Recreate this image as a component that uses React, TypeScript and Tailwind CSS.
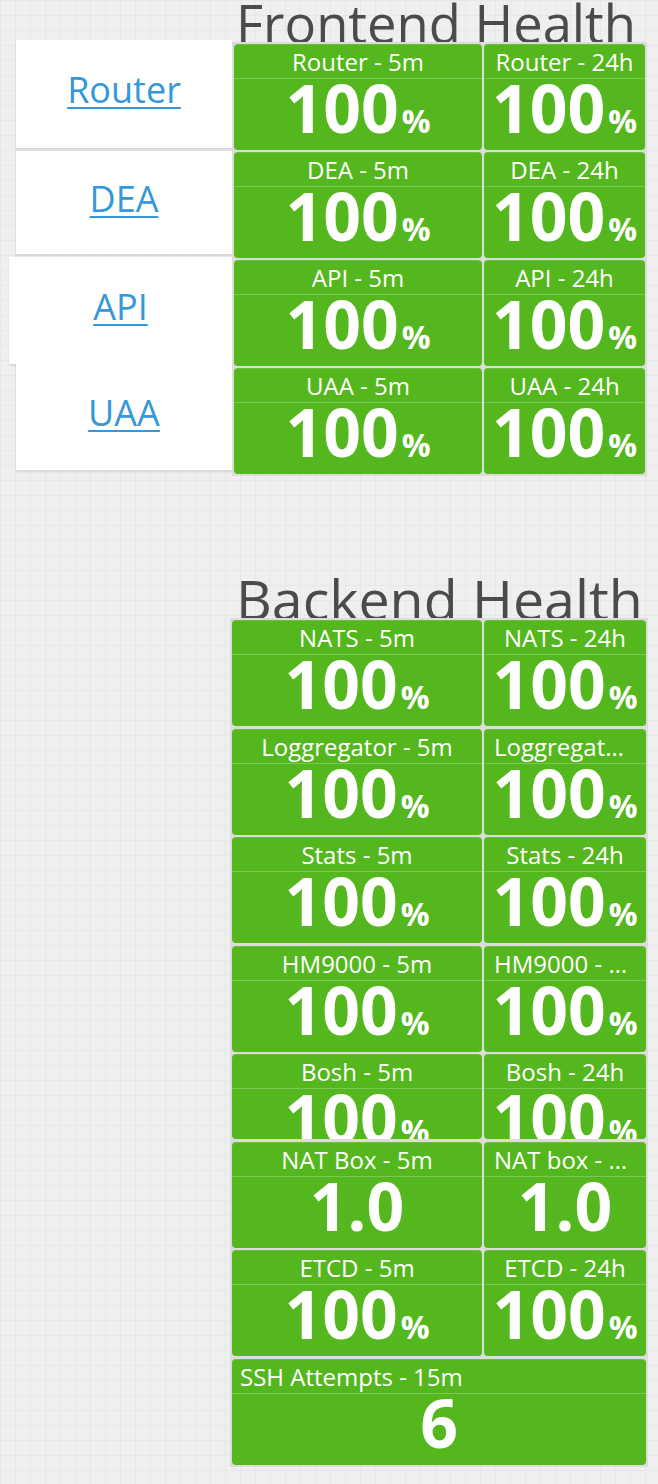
const FONT = "font-['Open_Sans','DejaVu_Sans',sans-serif]";

type TileData = {
  title: string;
  value: string;
  suffix?: string;
  short?: boolean;
};

const pct = (title: string): TileData => ({ title, value: "100", suffix: "%" });

const frontendRows: TileData[][] = [
  [pct("Router - 5m"), pct("Router - 24h")],
  [pct("DEA - 5m"), pct("DEA - 24h")],
  [pct("API - 5m"), pct("API - 24h")],
  [pct("UAA - 5m"), pct("UAA - 24h")],
];

const backendRows: TileData[][] = [
  [pct("NATS - 5m"), pct("NATS - 24h")],
  [pct("Loggregator - 5m"), pct("Loggregator - 24h")],
  [pct("Stats - 5m"), pct("Stats - 24h")],
  [pct("HM9000 - 5m"), pct("HM9000 - 24h")],
  [
    { ...pct("Bosh - 5m"), short: true },
    { ...pct("Bosh - 24h"), short: true },
  ],
  [
    { title: "NAT Box - 5m", value: "1.0" },
    { title: "NAT box - 24h", value: "1.0" },
  ],
  [pct("ETCD - 5m"), pct("ETCD - 24h")],
];

const links = [
  { name: "Router", cls: "ml-[16px] w-[216px] h-[108px]" },
  { name: "DEA", cls: "ml-[16px] w-[216px] h-[103px] mt-[3px]" },
  { name: "API", cls: "ml-[9px] w-[223px] h-[107px] mt-[3px]" },
  { name: "UAA", cls: "ml-[16px] w-[216px] h-[106px]" },
];

function Tile({ tile, left }: { tile: TileData; left?: boolean }) {
  return (
    <div
      className={`flex flex-col overflow-hidden rounded-[4px] bg-[#55b71e] text-white shadow-[inset_0_1px_0_rgba(255,255,255,0.12)] ${
        tile.short ? "h-[85px]" : "h-[106px]"
      }`}
    >
      <div
        className={`h-[35px] shrink-0 truncate border-b border-[#78c852] text-[24px] leading-[35px] ${
          left ? "px-2 text-left" : "px-[10px] text-center"
        }`}
      >
        {tile.title}
      </div>
      <div className="text-center text-[66px] font-bold leading-[56px] whitespace-nowrap">
        {tile.value}
        {tile.suffix && <span className="ml-[3px] text-[32px]">{tile.suffix}</span>}
      </div>
    </div>
  );
}

function Title({ text, size }: { text: string; size: string }) {
  return (
    <div className={`ml-[236px] h-[40px] whitespace-nowrap text-[#4b4b4b] ${size}`}>
      {text}
    </div>
  );
}

export default function App() {
  return (
    <div
      className={`${FONT} min-h-[1484px] w-full bg-[#efefef] [background-image:linear-gradient(#e7e7e7_1px,transparent_1px),linear-gradient(90deg,#e7e7e7_1px,transparent_1px)] [background-size:15px_15px]`}
    >
      {/* Frontend */}
      <Title text="Frontend Health" size="text-[52.5px] leading-[46px]" />
      <div className="flex">
        <div className="flex w-[232px] flex-col">
          {links.map((l) => (
            <div
              key={l.name}
              className={`flex items-center justify-center bg-white pb-[8px] shadow-[0_2px_2px_rgba(0,0,0,0.1)] ${l.cls}`}
            >
              <a
                href="#"
                className="text-[36px] text-[#3498db] underline decoration-2 underline-offset-[4px]"
              >
                {l.name}
              </a>
            </div>
          ))}
        </div>
        <div className="relative mt-[2px] grid grid-cols-[248px_161px] gap-[2px] self-start bg-[#dcdcdc] p-[2px]">
          {frontendRows.flat().map((t) => (
            <Tile key={t.title} tile={t} />
          ))}
        </div>
      </div>

      {/* Backend */}
      <div className="mt-[102px]">
        <Title text="Backend Health" size="text-[55.5px] leading-[42px]" />
        <div className="relative ml-[230px] grid w-[418px] grid-cols-[250px_162px] gap-x-[2px] gap-y-[2.5px] bg-[#dcdcdc] p-[2px]">
          {backendRows.flat().map((t) => (
            <Tile key={t.title} tile={t} />
          ))}
          <div className="col-span-2">
            <Tile tile={{ title: "SSH Attempts - 15m", value: "6" }} left />
          </div>
        </div>
      </div>
    </div>
  );
}
